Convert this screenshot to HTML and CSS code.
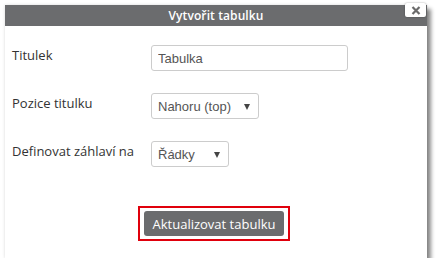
FILE: index.html
```html
<!DOCTYPE html>
<html lang="cs">
<head>
<meta charset="utf-8">
<link rel="stylesheet" href="styles.css">
</head>
<body>
<div class="dialog">
  <div class="titlebar">
    <span class="title">Vytvořit tabulku</span>
    <button class="close" aria-label="Zavřít">
      <svg width="10" height="9" viewBox="0 0 10 9"><path d="M1.5 1L8.5 8M8.5 1L1.5 8" stroke="#6b6b6b" stroke-width="2.2"/></svg>
    </button>
  </div>
  <div class="body">
    <div class="form">
      <label class="label">Titulek</label>
      <div class="ctrl"><input class="text" type="text" value="Tabulka"></div>
      <label class="label">Pozice titulku</label>
      <div class="ctrl"><div class="sel sel-pos"><span>Nahoru (top)</span><i class="arrow"></i></div></div>
      <label class="label">Definovat záhlaví na</label>
      <div class="ctrl"><div class="sel sel-rows"><span>Řádky</span><i class="arrow"></i></div></div>
    </div>
    <div class="actions">
      <span class="highlight"><button class="submit">Aktualizovat tabulku</button></span>
    </div>
  </div>
</div>
</body>
</html>
```

FILE: styles.css
```css
html, body {
  margin: 0;
  padding: 0;
  background: #fff;
}
body {
  padding: 5px 0 0 5px;
}
.dialog {
  position: relative;
  width: 422px;
  height: 253px;
  background: #fff;
  box-shadow: 0 0 3px rgba(0,0,0,0.15), 4px 4px 4px rgba(0,0,0,0.45);
  font-family: "Open Sans", sans-serif;
}
.titlebar {
  height: 21px;
  background: #6b6c6e;
  display: flex;
  align-items: center;
  justify-content: center;
}
.title {
  color: #fff;
  font-size: 12px;
  font-weight: 600;
  letter-spacing: 0.1px;
}
.close {
  position: absolute;
  top: -2px;
  right: 1px;
  width: 21px;
  height: 14px;
  padding: 0;
  border: none;
  border-radius: 2px;
  background: #fff;
  box-shadow: 0 0 2px rgba(0,0,0,0.35);
  display: flex;
  align-items: center;
  justify-content: center;
}
.body {
  padding: 19px 0 0 7px;
}
.form {
  display: grid;
  grid-template-columns: 139px auto;
  row-gap: 22px;
  align-items: start;
}
.label {
  font-size: 13px;
  color: #333;
  line-height: 18px;
  padding-top: 1px;
}
.ctrl {
  display: flex;
}
.text, .sel {
  box-sizing: border-box;
  height: 26px;
  border: 1px solid #ccc;
  border-radius: 3px;
  background: #fff;
  font-family: "Liberation Sans", Arial, sans-serif;
  font-size: 13px;
  color: #555;
}
.text {
  width: 197px;
  padding: 0 6px;
  outline: none;
}
.sel {
  position: relative;
  display: flex;
  align-items: center;
  padding-left: 6px;
}
.sel-pos { width: 108px; }
.sel-rows { width: 78px; }
.arrow {
  position: absolute;
  right: 8px;
  top: 10px;
  width: 0;
  height: 0;
  border-left: 3px solid transparent;
  border-right: 3px solid transparent;
  border-top: 6px solid #444;
}
.actions {
  display: flex;
  justify-content: center;
  padding-top: 39px;
  padding-right: 11px;
}
.highlight {
  display: flex;
  border: 2px solid #e0000c;
  padding: 3px 4px;
}
.submit {
  width: 140px;
  height: 25px;
  border: none;
  border-radius: 3px;
  background: #6b6c6e;
  color: #fff;
  font-family: "Open Sans", sans-serif;
  font-size: 13px;
  padding: 0;
}
```
